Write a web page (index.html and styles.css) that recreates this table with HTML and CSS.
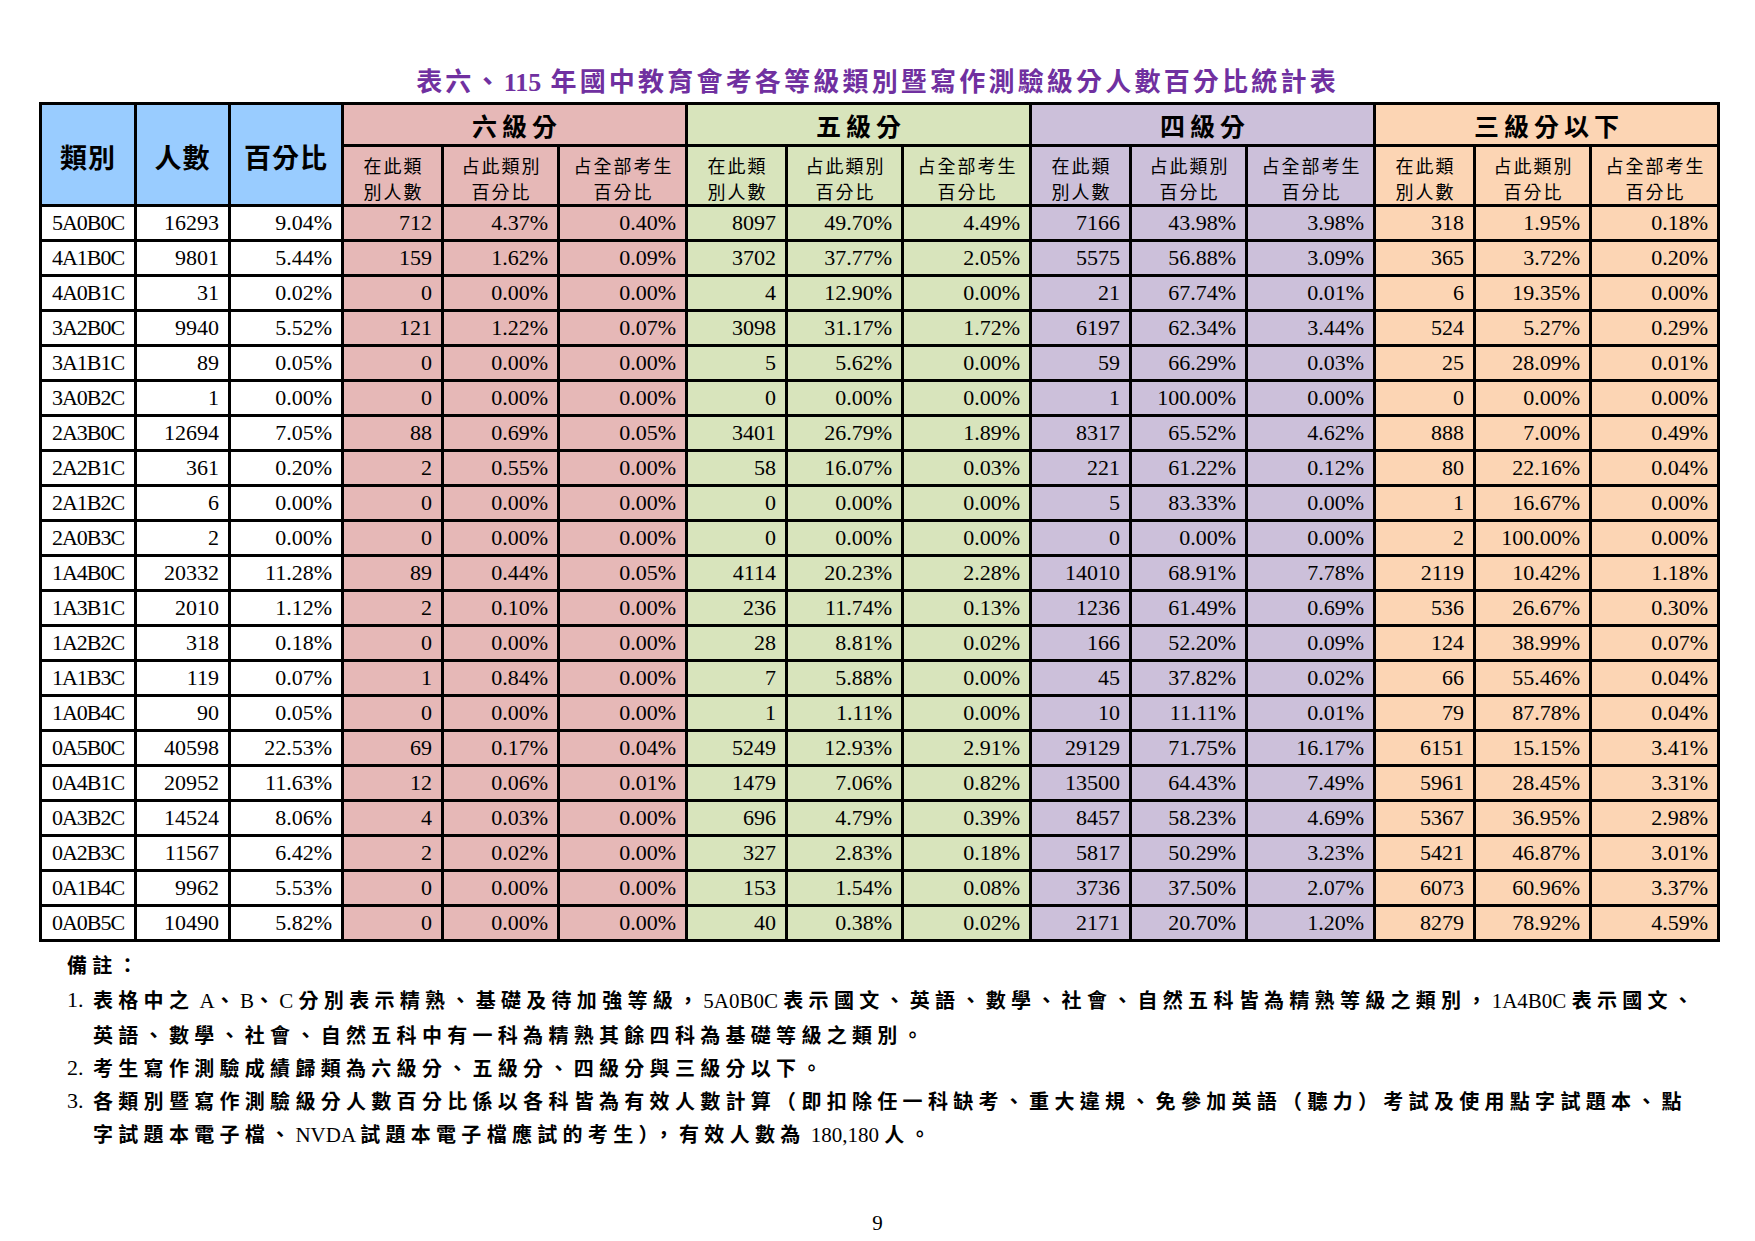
FILE: index.html
```html
<!DOCTYPE html>
<html lang="zh-Hant">
<head>
<meta charset="utf-8">
<title>表六、115 年國中教育會考各等級類別暨寫作測驗級分人數百分比統計表</title>
<link rel="stylesheet" href="styles.css">
</head>
<body>
<div class="page">
  <h1 class="title">表六、<span class="lat">115</span> 年國中教育會考各等級類別暨寫作測驗級分人數百分比統計表</h1>

  <table class="stats">
    <colgroup>
      <col class="w-cat"><col class="w-cnt"><col class="w-pct">
      <col class="w-a g6"><col class="w-b g6"><col class="w-c g6">
      <col class="w-a g5"><col class="w-b g5"><col class="w-c g5">
      <col class="w-a g4"><col class="w-b g4"><col class="w-c g4">
      <col class="w-a g3"><col class="w-b g3"><col class="w-c g3">
    </colgroup>
    <thead>
      <tr class="hrow1">
        <th rowspan="2" class="main">類別</th>
        <th rowspan="2" class="main">人數</th>
        <th rowspan="2" class="main">百分比</th>
        <th colspan="3" class="grp g6">六級分</th>
        <th colspan="3" class="grp g5">五級分</th>
        <th colspan="3" class="grp g4">四級分</th>
        <th colspan="3" class="grp g3">三級分以下</th>
      </tr>
      <tr class="hrow2">
        <th class="sub g6">在此類<br>別人數</th><th class="sub g6">占此類別<br>百分比</th><th class="sub g6">占全部考生<br>百分比</th>
        <th class="sub g5">在此類<br>別人數</th><th class="sub g5">占此類別<br>百分比</th><th class="sub g5">占全部考生<br>百分比</th>
        <th class="sub g4">在此類<br>別人數</th><th class="sub g4">占此類別<br>百分比</th><th class="sub g4">占全部考生<br>百分比</th>
        <th class="sub g3">在此類<br>別人數</th><th class="sub g3">占此類別<br>百分比</th><th class="sub g3">占全部考生<br>百分比</th>
      </tr>
    </thead>
    <tbody>
      <tr><td class="cat">5A0B0C</td><td>16293</td><td>9.04%</td><td>712</td><td>4.37%</td><td>0.40%</td><td>8097</td><td>49.70%</td><td>4.49%</td><td>7166</td><td>43.98%</td><td>3.98%</td><td>318</td><td>1.95%</td><td>0.18%</td></tr>
      <tr><td class="cat">4A1B0C</td><td>9801</td><td>5.44%</td><td>159</td><td>1.62%</td><td>0.09%</td><td>3702</td><td>37.77%</td><td>2.05%</td><td>5575</td><td>56.88%</td><td>3.09%</td><td>365</td><td>3.72%</td><td>0.20%</td></tr>
      <tr><td class="cat">4A0B1C</td><td>31</td><td>0.02%</td><td>0</td><td>0.00%</td><td>0.00%</td><td>4</td><td>12.90%</td><td>0.00%</td><td>21</td><td>67.74%</td><td>0.01%</td><td>6</td><td>19.35%</td><td>0.00%</td></tr>
      <tr><td class="cat">3A2B0C</td><td>9940</td><td>5.52%</td><td>121</td><td>1.22%</td><td>0.07%</td><td>3098</td><td>31.17%</td><td>1.72%</td><td>6197</td><td>62.34%</td><td>3.44%</td><td>524</td><td>5.27%</td><td>0.29%</td></tr>
      <tr><td class="cat">3A1B1C</td><td>89</td><td>0.05%</td><td>0</td><td>0.00%</td><td>0.00%</td><td>5</td><td>5.62%</td><td>0.00%</td><td>59</td><td>66.29%</td><td>0.03%</td><td>25</td><td>28.09%</td><td>0.01%</td></tr>
      <tr><td class="cat">3A0B2C</td><td>1</td><td>0.00%</td><td>0</td><td>0.00%</td><td>0.00%</td><td>0</td><td>0.00%</td><td>0.00%</td><td>1</td><td>100.00%</td><td>0.00%</td><td>0</td><td>0.00%</td><td>0.00%</td></tr>
      <tr><td class="cat">2A3B0C</td><td>12694</td><td>7.05%</td><td>88</td><td>0.69%</td><td>0.05%</td><td>3401</td><td>26.79%</td><td>1.89%</td><td>8317</td><td>65.52%</td><td>4.62%</td><td>888</td><td>7.00%</td><td>0.49%</td></tr>
      <tr><td class="cat">2A2B1C</td><td>361</td><td>0.20%</td><td>2</td><td>0.55%</td><td>0.00%</td><td>58</td><td>16.07%</td><td>0.03%</td><td>221</td><td>61.22%</td><td>0.12%</td><td>80</td><td>22.16%</td><td>0.04%</td></tr>
      <tr><td class="cat">2A1B2C</td><td>6</td><td>0.00%</td><td>0</td><td>0.00%</td><td>0.00%</td><td>0</td><td>0.00%</td><td>0.00%</td><td>5</td><td>83.33%</td><td>0.00%</td><td>1</td><td>16.67%</td><td>0.00%</td></tr>
      <tr><td class="cat">2A0B3C</td><td>2</td><td>0.00%</td><td>0</td><td>0.00%</td><td>0.00%</td><td>0</td><td>0.00%</td><td>0.00%</td><td>0</td><td>0.00%</td><td>0.00%</td><td>2</td><td>100.00%</td><td>0.00%</td></tr>
      <tr><td class="cat">1A4B0C</td><td>20332</td><td>11.28%</td><td>89</td><td>0.44%</td><td>0.05%</td><td>4114</td><td>20.23%</td><td>2.28%</td><td>14010</td><td>68.91%</td><td>7.78%</td><td>2119</td><td>10.42%</td><td>1.18%</td></tr>
      <tr><td class="cat">1A3B1C</td><td>2010</td><td>1.12%</td><td>2</td><td>0.10%</td><td>0.00%</td><td>236</td><td>11.74%</td><td>0.13%</td><td>1236</td><td>61.49%</td><td>0.69%</td><td>536</td><td>26.67%</td><td>0.30%</td></tr>
      <tr><td class="cat">1A2B2C</td><td>318</td><td>0.18%</td><td>0</td><td>0.00%</td><td>0.00%</td><td>28</td><td>8.81%</td><td>0.02%</td><td>166</td><td>52.20%</td><td>0.09%</td><td>124</td><td>38.99%</td><td>0.07%</td></tr>
      <tr><td class="cat">1A1B3C</td><td>119</td><td>0.07%</td><td>1</td><td>0.84%</td><td>0.00%</td><td>7</td><td>5.88%</td><td>0.00%</td><td>45</td><td>37.82%</td><td>0.02%</td><td>66</td><td>55.46%</td><td>0.04%</td></tr>
      <tr><td class="cat">1A0B4C</td><td>90</td><td>0.05%</td><td>0</td><td>0.00%</td><td>0.00%</td><td>1</td><td>1.11%</td><td>0.00%</td><td>10</td><td>11.11%</td><td>0.01%</td><td>79</td><td>87.78%</td><td>0.04%</td></tr>
      <tr><td class="cat">0A5B0C</td><td>40598</td><td>22.53%</td><td>69</td><td>0.17%</td><td>0.04%</td><td>5249</td><td>12.93%</td><td>2.91%</td><td>29129</td><td>71.75%</td><td>16.17%</td><td>6151</td><td>15.15%</td><td>3.41%</td></tr>
      <tr><td class="cat">0A4B1C</td><td>20952</td><td>11.63%</td><td>12</td><td>0.06%</td><td>0.01%</td><td>1479</td><td>7.06%</td><td>0.82%</td><td>13500</td><td>64.43%</td><td>7.49%</td><td>5961</td><td>28.45%</td><td>3.31%</td></tr>
      <tr><td class="cat">0A3B2C</td><td>14524</td><td>8.06%</td><td>4</td><td>0.03%</td><td>0.00%</td><td>696</td><td>4.79%</td><td>0.39%</td><td>8457</td><td>58.23%</td><td>4.69%</td><td>5367</td><td>36.95%</td><td>2.98%</td></tr>
      <tr><td class="cat">0A2B3C</td><td>11567</td><td>6.42%</td><td>2</td><td>0.02%</td><td>0.00%</td><td>327</td><td>2.83%</td><td>0.18%</td><td>5817</td><td>50.29%</td><td>3.23%</td><td>5421</td><td>46.87%</td><td>3.01%</td></tr>
      <tr><td class="cat">0A1B4C</td><td>9962</td><td>5.53%</td><td>0</td><td>0.00%</td><td>0.00%</td><td>153</td><td>1.54%</td><td>0.08%</td><td>3736</td><td>37.50%</td><td>2.07%</td><td>6073</td><td>60.96%</td><td>3.37%</td></tr>
      <tr><td class="cat">0A0B5C</td><td>10490</td><td>5.82%</td><td>0</td><td>0.00%</td><td>0.00%</td><td>40</td><td>0.38%</td><td>0.02%</td><td>2171</td><td>20.70%</td><td>1.20%</td><td>8279</td><td>78.92%</td><td>4.59%</td></tr>
    </tbody>
  </table>

  <div class="notes">
    <p class="notes-head">備註：</p>
    <ol class="note-list">
      <li><span class="num">1.</span><span class="txt">表格中之<span class="lat"> A</span>、<span class="lat">B</span>、<span class="lat">C </span>分別表示精熟、基礎及待加強等級，<span class="lat">5A0B0C </span>表示國文、英語、數學、社會、自然五科皆為精熟等級之類別，<span class="lat">1A4B0C </span>表示國文、<br>英語、數學、社會、自然五科中有一科為精熟其餘四科為基礎等級之類別。</span></li>
      <li><span class="num">2.</span><span class="txt">考生寫作測驗成績歸類為六級分、五級分、四級分與三級分以下。</span></li>
      <li><span class="num">3.</span><span class="txt">各類別暨寫作測驗級分人數百分比係以各科皆為有效人數計算（即扣除任一科缺考、重大違規、免參加英語（聽力）考試及使用點字試題本、點<br>字試題本電子檔、<span class="lat">NVDA </span>試題本電子檔應試的考生），有效人數為<span class="lat"> 180,180 </span>人。</span></li>
    </ol>
  </div>

  <div class="page-no">9</div>
</div>
</body>
</html>
```

FILE: styles.css
```css
html, body {
  margin: 0;
  padding: 0;
  background: #ffffff;
}

.page {
  width: 1755px;
  height: 1241px;
  display: flex;
  flex-direction: column;
  font-family: "Noto Sans CJK TC", "Noto Sans CJK SC", sans-serif;
  color: #000;
  overflow: hidden;
}

.lat {
  font-family: "Liberation Serif", "Noto Sans CJK TC", serif;
  letter-spacing: 0;
}

/* ---------- title ---------- */
.title {
  margin: 0;
  padding-top: 62px;
  height: 36px;
  line-height: 36px;
  text-align: center;
  font-size: 26px;
  font-weight: 700;
  letter-spacing: 3.2px;
  color: #7030a0;
}

/* ---------- table ---------- */
.stats {
  margin: 4px 0 0 39px;
  width: 1678px;
  table-layout: fixed;
  border-collapse: collapse;
  border: 3px solid #000;
}

.w-cat { width: 95px; }
.w-cnt { width: 94px; }
.w-pct { width: 113px; }
.w-a { width: 100px; }
.w-b { width: 116px; }
.w-c { width: 128px; }

col.g6, th.g6 { background: #e6b8b7; }
col.g5, th.g5 { background: #d8e4bc; }
col.g4, th.g4 { background: #ccc0da; }
col.g3, th.g3 { background: #fcd5b4; }

.stats th,
.stats td {
  border: 3px solid #000;
  padding: 0;
}

.stats th {
  font-weight: 400;
  text-align: center;
  vertical-align: middle;
}

.hrow1 { height: 42px; }
.hrow2 { height: 60px; }

.stats th.main {
  background: #99ccff;
  font-size: 27px;
  font-weight: 700;
  letter-spacing: 1px;
  padding-top: 4px;
}

.stats th.grp {
  font-size: 25px;
  font-weight: 700;
  letter-spacing: 5px;
  padding-left: 5px;
}

.stats th.sub {
  font-size: 18px;
  line-height: 26px;
  letter-spacing: 2px;
  padding: 5px 0 0 2px;
}

.stats tbody tr { height: 35px; }

.stats td {
  text-align: right;
  padding-right: 9px;
  font-family: "Liberation Serif", serif;
  font-size: 22px;
  line-height: 28px;
  vertical-align: middle;
}

.stats td.cat {
  text-align: center;
  padding-right: 0;
  letter-spacing: -1px;
}

/* ---------- notes ---------- */
.notes {
  margin: 6px 0 0 67px;
  font-size: 20px;
  font-weight: 700;
  letter-spacing: 5.3px;
  line-height: 33px;
}

.notes .lat {
  font-size: 21px;
  font-weight: 400;
  white-space: pre;
}

.notes-head {
  margin: 0 0 2px;
}

.note-list {
  list-style: none;
  margin: 0;
  padding: 0;
}

.note-list li {
  display: flex;
}

.note-list .num {
  flex: 0 0 26px;
  font-family: "Liberation Serif", serif;
  font-size: 22px;
  font-weight: 400;
  letter-spacing: 0;
}

.note-list .txt {
  flex: 1;
}

/* ---------- page number ---------- */
.page-no {
  margin-top: auto;
  padding-bottom: 6px;
  text-align: center;
  font-family: "Liberation Serif", serif;
  font-size: 21px;
  line-height: 24px;
}
```
